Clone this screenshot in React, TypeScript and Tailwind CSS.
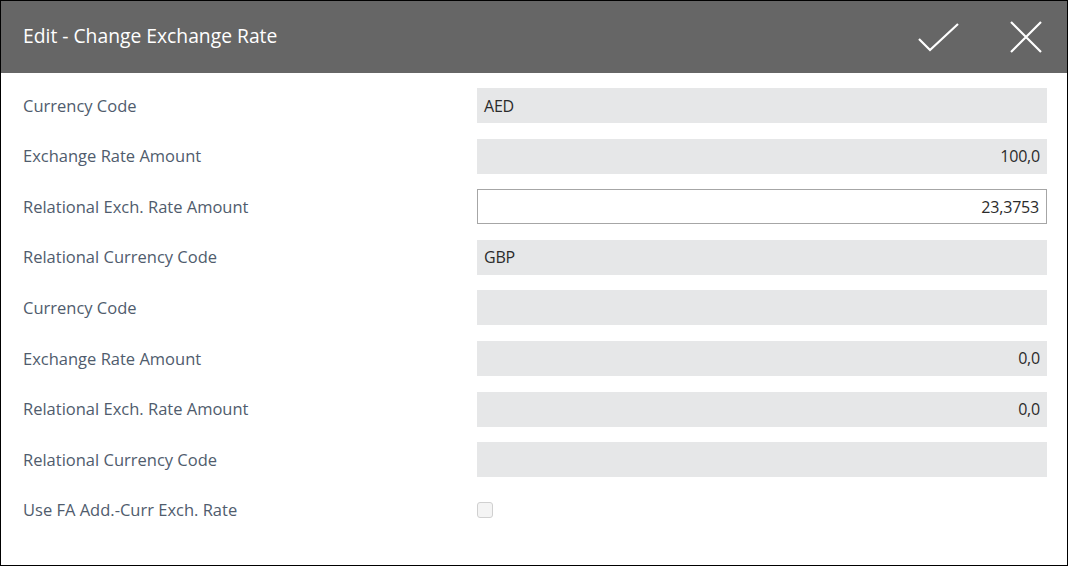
import React from "react";

type Row = { label: string; value?: string; kind: "ro" | "edit" | "check"; align?: "left" | "right" };

const rows: Row[] = [
  { label: "Currency Code", value: "AED", kind: "ro", align: "left" },
  { label: "Exchange Rate Amount", value: "100,0", kind: "ro", align: "right" },
  { label: "Relational Exch. Rate Amount", value: "23,3753", kind: "edit", align: "right" },
  { label: "Relational Currency Code", value: "GBP", kind: "ro", align: "left" },
  { label: "Currency Code", value: "", kind: "ro", align: "left" },
  { label: "Exchange Rate Amount", value: "0,0", kind: "ro", align: "right" },
  { label: "Relational Exch. Rate Amount", value: "0,0", kind: "ro", align: "right" },
  { label: "Relational Currency Code", value: "", kind: "ro", align: "left" },
];

export default function App() {
  return (
    <div
      className="w-[1068px] h-[566px] border border-black bg-white flex flex-col"
      style={{ fontFamily: '"Open Sans", "Noto Sans", sans-serif' }}
    >
      <div className="h-[72px] bg-[#666666] flex items-center pl-[22px] pr-[24px] shrink-0">
        <div className="text-white text-[19.3px] flex-1 -mt-[1px]">Edit - Change Exchange Rate</div>
        <svg width="44" height="32" viewBox="0 0 44 32" className="mr-[48px] mt-[2px]">
          <path d="M2 17 L13 28 L41 2" fill="none" stroke="white" strokeWidth="2.2" />
        </svg>
        <svg width="34" height="34" viewBox="0 0 34 34">
          <path d="M2 2 L32 32 M32 2 L2 32" fill="none" stroke="white" strokeWidth="2.2" />
        </svg>
      </div>
      <div className="flex flex-col pt-[15px] pl-[22px] pr-[20px]">
        {rows.map((r, i) => (
          <div key={i} className="flex items-center h-[35px] mb-[15.6px]">
            <div className="w-[454px] text-[16.5px] text-[#505c6d] pt-[1px]">{r.label}</div>
            <div
              className={
                "flex-1 h-[35px] flex items-center px-[7px] text-[16px] text-[#2b2b2b] tracking-[-0.2px] " +
                (r.kind === "edit" ? "bg-white border border-[#a6a6a6] " : "bg-[#e6e7e8] ") +
                (r.align === "right" ? "justify-end" : "justify-start")
              }
            >
              {r.value}
            </div>
          </div>
        ))}
        <div className="flex items-center h-[35px]">
          <div className="w-[454px] text-[16.5px] text-[#505c6d] pt-[1px]">Use FA Add.-Curr Exch. Rate</div>
          <div className="w-[16px] h-[16px] rounded-[3px] border border-[#d0d0d0] bg-[#f4f4f4]" />
        </div>
      </div>
    </div>
  );
}
